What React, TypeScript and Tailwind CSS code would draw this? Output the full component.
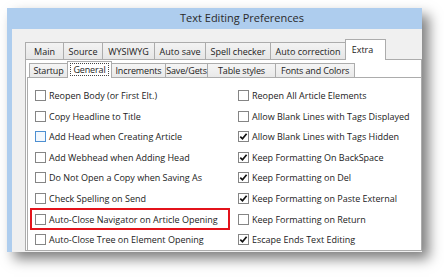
import React from 'react'

// Cropped "Text Editing Preferences" dialog, Extra > General page

interface TabDef {
  label: string
  w: number
}

const MAIN_TABS: TabDef[] = [
  { label: 'Main', w: 39 },
  { label: 'Source', w: 40 },
  { label: 'WYSIWYG', w: 53 },
  { label: 'Auto save', w: 52 },
  { label: 'Spell checker', w: 66 },
  { label: 'Auto correction', w: 76 },
]

const SUB_TABS_AFTER: TabDef[] = [
  { label: 'Increments', w: 55 },
  { label: 'Save/Gets', w: 43 },
  { label: 'Table styles', w: 69 },
  { label: 'Fonts and Colors', w: 80 },
]

interface Option {
  label: string
  checked?: boolean
  hover?: boolean
  marked?: boolean
}

const LEFT: Option[] = [
  { label: 'Reopen Body (or First Elt.)' },
  { label: 'Copy Headline to Title' },
  { label: 'Add Head when Creating Article', hover: true },
  { label: 'Add Webhead when Adding Head' },
  { label: 'Do Not Open a Copy when Saving As' },
  { label: 'Check Spelling on Send' },
  { label: 'Auto-Close Navigator on Article Opening', marked: true },
  { label: 'Auto-Close Tree on Element Opening' },
]

const RIGHT: Option[] = [
  { label: 'Reopen All Article Elements' },
  { label: 'Allow Blank Lines with Tags Displayed' },
  { label: 'Allow Blank Lines with Tags Hidden', checked: true },
  { label: 'Keep Formatting On BackSpace', checked: true },
  { label: 'Keep Formatting on Del', checked: true },
  { label: 'Keep Formatting on Paste External', checked: true },
  { label: 'Keep Formatting on Return' },
  { label: 'Escape Ends Text Editing', checked: true },
]

function CheckBox({ checked, hover }: { checked?: boolean; hover?: boolean }) {
  return (
    <div
      className={`w-[11px] h-[11px] shrink-0 border flex items-center justify-center ${
        hover ? 'border-[#4d8fd1] bg-[#f2f8fe]' : 'border-[#858585] bg-white'
      }`}
    >
      {checked && (
        <svg width="9" height="9" viewBox="0 0 9 9">
          <path d="M1.3 4.6 L3.5 6.8 L7.6 1.8" fill="none" stroke="#111" strokeWidth="1.7" />
        </svg>
      )}
    </div>
  )
}

function OptionRow({ opt }: { opt: Option }) {
  return (
    <div className="relative h-[20.6px] flex items-center gap-[3px]">
      <CheckBox checked={opt.checked} hover={opt.hover} />
      <span className="whitespace-nowrap leading-none">{opt.label}</span>
      {opt.marked && (
        <div className="absolute left-[-5px] top-[-1px] w-[200px] h-[22px] border-2 border-[#e3131b]" />
      )}
    </div>
  )
}

export default function App() {
  return (
    <div className="w-[444px] h-[278px] bg-white overflow-hidden pl-[7px] pt-[8px] font-['Open_Sans','Noto_Sans',sans-serif] text-[9px] text-[#222]">
      <div className="w-[415px] h-[244px] flex flex-col shadow-[7px_7px_12px_rgba(0,0,0,0.5)]">
        {/* Title bar */}
        <div className="h-[22px] bg-[#aecdee] flex items-center pl-[173px] text-[11px] text-[#2a2a2a]">
          Text Editing Preferences
        </div>

        <div className="flex-1 flex">
          <div className="w-[5px] bg-[#aecdee]" />
          <div className="flex-1 bg-[#f0f0f0] pl-[13px] pt-[10px] pb-[1px] flex flex-col">
            {/* Main tabs */}
            <div className="h-[20px] flex items-end">
              {MAIN_TABS.map((t, i) => (
                <div
                  key={t.label}
                  className={`h-[17px] border border-b-0 border-[#acacac] bg-gradient-to-b from-[#f3f3f3] to-[#e6e6e6] flex items-center justify-center whitespace-nowrap ${
                    i > 0 ? '-ml-px' : ''
                  }`}
                  style={{ width: t.w }}
                >
                  {t.label}
                </div>
              ))}
              <div className="relative z-10 -ml-px -mb-px h-[21px] w-[41px] border border-b-0 border-[#acacac] bg-white flex items-center justify-center pr-[6px] pb-[2px]">
                Extra
              </div>
            </div>

            {/* Extra page */}
            <div className="flex-1 bg-white border border-[#acacac] pt-[1px] pl-[1px] flex flex-col">
              {/* Sub tabs */}
              <div className="h-[16px] flex items-end pl-[2px] tracking-[-0.15px]">
                <div className="h-[14px] w-[39px] border border-b-0 border-[#acacac] bg-gradient-to-b from-[#f5f5f5] to-[#e9e9e9] flex items-center justify-center">
                  Startup
                </div>
                <div className="relative z-10 -ml-px -mb-px h-[17px] w-[45px] border border-b-0 border-[#acacac] bg-white flex items-center justify-center pb-[1px]">
                  <span className="border border-dotted border-[#444] px-[2px] leading-[11px]">General</span>
                </div>
                {SUB_TABS_AFTER.map((t) => (
                  <div
                    key={t.label}
                    className="-ml-px h-[14px] border border-b-0 border-[#acacac] bg-gradient-to-b from-[#f5f5f5] to-[#e9e9e9] flex items-center justify-center whitespace-nowrap"
                    style={{ width: t.w }}
                  >
                    {t.label}
                  </div>
                ))}
              </div>

              {/* General options */}
              <div className="flex-1 border-l border-t border-[#acacac] pt-[7px] pl-[7px] flex">
                <div className="w-[203px] flex flex-col">
                  {LEFT.map((o) => (
                    <OptionRow key={o.label} opt={o} />
                  ))}
                </div>
                <div className="flex-1 flex flex-col">
                  {RIGHT.map((o) => (
                    <OptionRow key={o.label} opt={o} />
                  ))}
                </div>
              </div>
            </div>
          </div>
        </div>
      </div>
    </div>
  )
}
